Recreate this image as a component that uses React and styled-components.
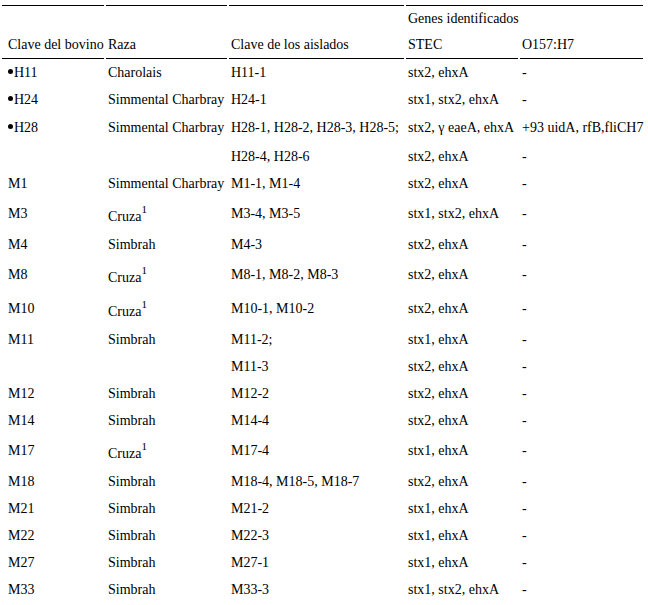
import React from 'react'
import styled, { createGlobalStyle } from 'styled-components'

const GlobalStyle = createGlobalStyle`
    body {
        margin: 0;
        background: #fff;
        color: #000;
        font-family: "Liberation Serif", "Times New Roman", serif;
        font-size: 14px;
    }
`

const rows = [
    { bovino: 'H11', dot: true, raza: 'Charolais', aislados: 'H11-1', stec: 'stx2, ehxA', o157: '-' },
    { bovino: 'H24', dot: true, raza: 'Simmental Charbray', aislados: 'H24-1', stec: 'stx1, stx2, ehxA', o157: '-' },
    { bovino: 'H28', dot: true, h: 30, raza: 'Simmental Charbray', aislados: 'H28-1, H28-2, H28-3, H28-5;', stec: 'stx2, γ eaeA, ehxA', o157: '+93 uidA, rfB,fliCH7' },
    { bovino: '', raza: '', aislados: 'H28-4, H28-6', stec: 'stx2, ehxA', o157: '-' },
    { bovino: 'M1', raza: 'Simmental Charbray', aislados: 'M1-1, M1-4', stec: 'stx2, ehxA', o157: '-' },
    { bovino: 'M3', raza: 'Cruza', cruza: true, aislados: 'M3-4, M3-5', stec: 'stx1, stx2, ehxA', o157: '-' },
    { bovino: 'M4', raza: 'Simbrah', aislados: 'M4-3', stec: 'stx2, ehxA', o157: '-' },
    { bovino: 'M8', raza: 'Cruza', cruza: true, aislados: 'M8-1, M8-2, M8-3', stec: 'stx2, ehxA', o157: '-' },
    { bovino: 'M10', raza: 'Cruza', cruza: true, aislados: 'M10-1, M10-2', stec: 'stx2, ehxA', o157: '-' },
    { bovino: 'M11', raza: 'Simbrah', aislados: 'M11-2;', stec: 'stx1, ehxA', o157: '-' },
    { bovino: '', raza: '', aislados: 'M11-3', stec: 'stx2, ehxA', o157: '-' },
    { bovino: 'M12', raza: 'Simbrah', aislados: 'M12-2', stec: 'stx2, ehxA', o157: '-' },
    { bovino: 'M14', raza: 'Simbrah', aislados: 'M14-4', stec: 'stx2, ehxA', o157: '-' },
    { bovino: 'M17', raza: 'Cruza', cruza: true, aislados: 'M17-4', stec: 'stx1, ehxA', o157: '-' },
    { bovino: 'M18', raza: 'Simbrah', aislados: 'M18-4, M18-5, M18-7', stec: 'stx2, ehxA', o157: '-' },
    { bovino: 'M21', raza: 'Simbrah', aislados: 'M21-2', stec: 'stx1, ehxA', o157: '-' },
    { bovino: 'M22', raza: 'Simbrah', aislados: 'M22-3', stec: 'stx1, ehxA', o157: '-' },
    { bovino: 'M27', raza: 'Simbrah', aislados: 'M27-1', stec: 'stx1, ehxA', o157: '-' },
    { bovino: 'M33', raza: 'Simbrah', aislados: 'M33-3', stec: 'stx1, stx2, ehxA', o157: '-' },
]

const App = () => {
    return (
        <>
            <GlobalStyle />
            <Table>
                <colgroup>
                    <col style={{ width: 102 }} />
                    <col style={{ width: 121 }} />
                    <col style={{ width: 175 }} />
                    <col style={{ width: 112 }} />
                    <col style={{ width: 123 }} />
                </colgroup>
                <thead>
                    <tr>
                        <HeadCell $top $first></HeadCell>
                        <HeadCell $top></HeadCell>
                        <HeadCell $top></HeadCell>
                        <HeadCell $top colSpan={2}>Genes identificados</HeadCell>
                    </tr>
                    <tr>
                        <HeadCell $bottom $first>Clave del bovino</HeadCell>
                        <HeadCell $bottom>Raza</HeadCell>
                        <HeadCell $bottom>Clave de los aislados</HeadCell>
                        <HeadCell $bottom>STEC</HeadCell>
                        <HeadCell $bottom>O157:H7</HeadCell>
                    </tr>
                </thead>
                <tbody>
                    {rows.map((r, i) => {
                        const h = r.h || (r.cruza ? 34 : 27)
                        return (
                            <tr key={i}>
                                <Cell $first $h={h}>
                                    {r.dot && <Dot />}
                                    {r.bovino}
                                </Cell>
                                <Cell $h={h}>
                                    {r.raza}
                                    {r.cruza && <Sup>1</Sup>}
                                </Cell>
                                <Cell $h={h}>{r.aislados}</Cell>
                                <Cell $h={h}>{r.stec}</Cell>
                                <Cell $h={h}>{r.o157}</Cell>
                            </tr>
                        )
                    })}
                </tbody>
            </Table>
        </>
    )
}

export default App

const Table = styled.table`
    table-layout: fixed;
    border-collapse: separate;
    border-spacing: 2px 0;
    margin-top: 5px;
    width: 643px;
`

const HeadCell = styled.td`
    height: 26px;
    padding: 0 0 0 ${props => props.$first ? '6px' : '2px'};
    white-space: nowrap;
    vertical-align: middle;
    border-top: ${props => props.$top ? '1px solid #000' : 'none'};
    border-bottom: ${props => props.$bottom ? '1px solid #000' : 'none'};
    line-height: 16px;
`

const Cell = styled.td`
    height: ${props => props.$h}px;
    padding: 0 0 0 ${props => props.$first ? '6px' : '2px'};
    white-space: nowrap;
    vertical-align: middle;
    line-height: 16px;
`

const Dot = styled.span`
    display: inline-block;
    width: 5px;
    height: 5px;
    border-radius: 50%;
    background: #000;
    margin-right: 1px;
    vertical-align: 3px;
`

const Sup = styled.sup`
    font-size: 11px;
    line-height: 10px;
    vertical-align: 8px;
`
